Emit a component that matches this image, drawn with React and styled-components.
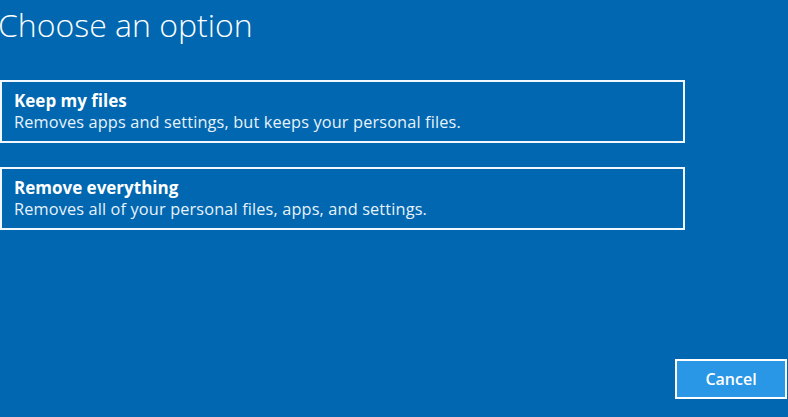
import React from "react";
import styled, { createGlobalStyle } from "styled-components";

const Global = createGlobalStyle`
  html, body { margin: 0; padding: 0; background: #0067b0; }
  body { width: 788px; height: 417px; overflow: hidden; }
`;

const Page = styled.div`
  width: 788px;
  height: 417px;
  background: #0067b0;
  color: #ffffff;
  font-family: "Open Sans", "Noto Sans", sans-serif;
  display: flex;
  flex-direction: column;
  box-sizing: border-box;
  padding: 0 0 18px 0;
`;

const Heading = styled.h1`
  margin: 3px 0 0 -2px;
  font-weight: 300;
  font-size: 32px;
  line-height: 44px;
`;

const Options = styled.div`
  display: flex;
  flex-direction: column;
  gap: 24px;
  margin-top: 33px;
  width: 685px;
`;

const Option = styled.button`
  display: flex;
  flex-direction: column;
  align-items: flex-start;
  box-sizing: border-box;
  height: 63px;
  padding: 8px 12px 0 12px;
  border: 2px solid #f2f8ff;
  background: transparent;
  color: #ffffff;
  font-family: inherit;
  text-align: left;
  cursor: pointer;
`;

const OptionTitle = styled.span`
  font-weight: 700;
  font-size: 17px;
  line-height: 21px;
`;

const OptionText = styled.span`
  font-weight: 400;
  font-size: 16.3px;
  line-height: 23px;
  letter-spacing: 0.15px;
  color: #e8f2fb;
`;

const Footer = styled.div`
  margin-top: auto;
  display: flex;
  justify-content: flex-end;
  padding-right: 1px;
`;

const CancelButton = styled.button`
  width: 112px;
  height: 40px;
  box-sizing: border-box;
  border: 2px solid #ffffff;
  background: #2996e6;
  color: #ffffff;
  font-family: inherit;
  font-weight: 600;
  font-size: 16px;
  cursor: pointer;
`;

export default function App() {
  return (
    <>
      <Global />
      <Page>
        <Heading>Choose an option</Heading>
        <Options>
          <Option>
            <OptionTitle>Keep my files</OptionTitle>
            <OptionText>Removes apps and settings, but keeps your personal files.</OptionText>
          </Option>
          <Option>
            <OptionTitle>Remove everything</OptionTitle>
            <OptionText>Removes all of your personal files, apps, and settings.</OptionText>
          </Option>
        </Options>
        <Footer>
          <CancelButton>Cancel</CancelButton>
        </Footer>
      </Page>
    </>
  );
}
